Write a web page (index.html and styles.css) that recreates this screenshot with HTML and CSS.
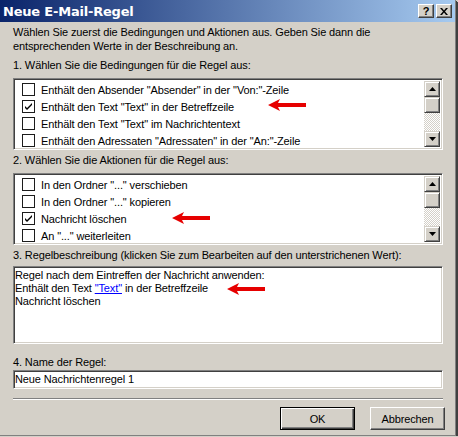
FILE: index.html
```html
<!DOCTYPE html>
<html>
<head>
<meta charset="utf-8">
<link rel="stylesheet" href="styles.css">
</head>
<body>
<div class="window">
  <div class="titlebar">
    <span class="title">Neue E-Mail-Regel</span>
    <div class="tbuttons">
      <span class="tbtn help">?</span>
      <span class="tbtn close"><svg width="8" height="7" viewBox="0 0 8 7"><path d="M0 0h2l2 2.5L6 0h2L5 3.5 8 7H6L4 4.5 2 7H0l3-3.5z" fill="#000"/></svg></span>
    </div>
  </div>
  <div class="content">
    <p class="intro">Wählen Sie zuerst die Bedingungen und Aktionen aus. Geben Sie dann die entsprechenden Werte in der Beschreibung an.</p>

    <div class="label l1">1. Wählen Sie die Bedingungen für die Regel aus:</div>
    <div class="listbox">
      <ul class="items">
        <li><span class="cb"></span>Enthält den Absender "Absender" in der "Von:"-Zeile</li>
        <li><span class="cb checked"><svg width="9" height="9" viewBox="0 0 9 9"><path d="M1 4l2 2 5-5v2L3 8 1 6z" fill="#000"/></svg></span>Enthält den Text "Text" in der Betreffzeile</li>
        <li><span class="cb"></span>Enthält den Text "Text" im Nachrichtentext</li>
        <li><span class="cb"></span>Enthält den Adressaten "Adressaten" in der "An:"-Zeile</li>
      </ul>
      <div class="scrollbar">
        <span class="sbtn"><svg width="7" height="4" viewBox="0 0 7 4"><path d="M3.5 0L7 4H0z" fill="#000"/></svg></span>
        <span class="thumb"></span>
        <span class="track"></span>
        <span class="sbtn"><svg width="7" height="4" viewBox="0 0 7 4"><path d="M0 0h7L3.5 4z" fill="#000"/></svg></span>
      </div>
    </div>

    <div class="label l2">2. Wählen Sie die Aktionen für die Regel aus:</div>
    <div class="listbox">
      <ul class="items">
        <li><span class="cb"></span>In den Ordner "..." verschieben</li>
        <li><span class="cb"></span>In den Ordner "..." kopieren</li>
        <li><span class="cb checked"><svg width="9" height="9" viewBox="0 0 9 9"><path d="M1 4l2 2 5-5v2L3 8 1 6z" fill="#000"/></svg></span>Nachricht löschen</li>
        <li><span class="cb"></span>An "..." weiterleiten</li>
      </ul>
      <div class="scrollbar">
        <span class="sbtn"><svg width="7" height="4" viewBox="0 0 7 4"><path d="M3.5 0L7 4H0z" fill="#000"/></svg></span>
        <span class="thumb"></span>
        <span class="track"></span>
        <span class="sbtn"><svg width="7" height="4" viewBox="0 0 7 4"><path d="M0 0h7L3.5 4z" fill="#000"/></svg></span>
      </div>
    </div>

    <div class="label l3">3. Regelbeschreibung (klicken Sie zum Bearbeiten auf den unterstrichenen Wert):</div>
    <div class="descbox">
      <div>Regel nach dem Eintreffen der Nachricht anwenden:</div>
      <div>Enthält den Text <a class="link">"Text"</a> in der Betreffzeile</div>
      <div>Nachricht löschen</div>
    </div>

    <div class="label l4">4. Name der Regel:</div>
    <div class="inputbox">Neue Nachrichtenregel 1</div>

    <div class="separator"></div>

    <div class="buttons">
      <span class="btn default">OK</span>
      <span class="btn">Abbrechen</span>
    </div>
  </div>

  <svg class="arrow a1" width="38" height="12" viewBox="0 0 38 12"><path d="M0 6 L12 0 L10 4 L38 4 L38 8 L10 8 L12 12 Z" fill="#e60000"/></svg>
  <svg class="arrow a2" width="38" height="12" viewBox="0 0 38 12"><path d="M0 6 L12 0 L10 4 L38 4 L38 8 L10 8 L12 12 Z" fill="#e60000"/></svg>
  <svg class="arrow a3" width="38" height="12" viewBox="0 0 38 12"><path d="M0 6 L12 0 L10 4 L38 4 L38 8 L10 8 L12 12 Z" fill="#e60000"/></svg>
</div>
</body>
</html>
```

FILE: styles.css
```css
html, body {
  margin: 0;
  padding: 0;
  background: #d4d0c8;
}
body {
  font-family: "Liberation Sans", Arial, sans-serif;
  font-size: 11px;
  color: #000;
}
.window {
  position: relative;
  width: 455px;
  height: 435px;
  background: #d4d0c8;
  border-right: 1px solid #808080;
  border-bottom: 1px solid #808080;
  box-shadow: 1px 1px 0 #404040, 2px 2px 0 #404040;
  display: flex;
  flex-direction: column;
  overflow: visible;
}
.titlebar {
  height: 22px;
  background: linear-gradient(to right, #0a246a, #a6caf0);
  display: flex;
  align-items: center;
  justify-content: space-between;
  padding: 0 3px 0 3px;
  flex-shrink: 0;
}
.title {
  color: #fff;
  font-weight: bold;
  font-size: 13px;
  font-family: "DejaVu Sans", "Liberation Sans", sans-serif;
  letter-spacing: -0.2px;
}
.tbuttons {
  display: flex;
  gap: 2px;
}
.tbtn {
  width: 16px;
  height: 14px;
  box-sizing: border-box;
  background: #d4d0c8;
  border-top: 1px solid #fff;
  border-left: 1px solid #fff;
  border-right: 1px solid #404040;
  border-bottom: 1px solid #404040;
  box-shadow: inset -1px -1px 0 #808080;
  display: flex;
  align-items: center;
  justify-content: center;
  font-weight: bold;
  font-size: 11px;
  line-height: 12px;
}
.content {
  padding: 3px 12px 0 13px;
  display: flex;
  flex-direction: column;
  letter-spacing: -0.12px;
}
.intro {
  margin: 0;
  line-height: 14px;
  width: 380px;
}
.label {
  line-height: 13px;
  height: 13px;
  white-space: nowrap;
}
.l1 { margin-top: 6px; margin-bottom: 6px; }
.l2 { margin-top: 4px; margin-bottom: 6px; }
.l3 { margin-top: 4px; margin-bottom: 4px; }
.l4 { margin-top: 12px; margin-bottom: 1px; }
.listbox {
  height: 72px;
  flex-shrink: 0;
  box-sizing: border-box;
  background: #fff;
  border-top: 1px solid #808080;
  border-left: 1px solid #808080;
  border-right: 1px solid #fff;
  border-bottom: 1px solid #fff;
  box-shadow: inset 1px 1px 0 #404040, inset -1px -1px 0 #d4d0c8;
  display: flex;
  padding: 2px;
}
.items {
  list-style: none;
  margin: 0;
  padding: 0 0 0 6px;
  flex: 1;
}
.items li {
  height: 17px;
  display: flex;
  align-items: center;
  white-space: nowrap;
}
.cb {
  width: 13px;
  height: 13px;
  box-sizing: border-box;
  border: 1px solid #1c1c1c;
  background: #fff;
  margin-right: 6px;
  display: flex;
  align-items: center;
  justify-content: center;
  flex-shrink: 0;
}
.scrollbar {
  width: 16px;
  display: flex;
  flex-direction: column;
}
.sbtn, .thumb {
  width: 16px;
  height: 16px;
  box-sizing: border-box;
  background: #d4d0c8;
  border-top: 1px solid #d4d0c8;
  border-left: 1px solid #d4d0c8;
  border-right: 1px solid #404040;
  border-bottom: 1px solid #404040;
  box-shadow: inset 1px 1px 0 #fff, inset -1px -1px 0 #808080;
  display: flex;
  align-items: center;
  justify-content: center;
  flex-shrink: 0;
}
.track {
  flex: 1;
  background-color: #fff;
  background-image: repeating-conic-gradient(#d4d0c8 0 25%, #fff 0 50%);
  background-size: 2px 2px;
}
.descbox {
  height: 78px;
  flex-shrink: 0;
  box-sizing: border-box;
  background: #fff;
  border-top: 1px solid #808080;
  border-left: 1px solid #808080;
  border-right: 1px solid #fff;
  border-bottom: 1px solid #fff;
  box-shadow: inset 1px 1px 0 #404040, inset -1px -1px 0 #d4d0c8;
  padding: 2px 1px;
  line-height: 13px;
}
.link {
  color: #0000ff;
  text-decoration: underline;
}
.inputbox {
  height: 19px;
  flex-shrink: 0;
  box-sizing: border-box;
  background: #fff;
  border-top: 1px solid #808080;
  border-left: 1px solid #808080;
  border-right: 1px solid #fff;
  border-bottom: 1px solid #fff;
  box-shadow: inset 1px 1px 0 #404040, inset -1px -1px 0 #d4d0c8;
  padding: 2px 1px;
  line-height: 13px;
}
.separator {
  margin-top: 9px;
  height: 0;
  border-top: 1px solid #808080;
  border-bottom: 1px solid #fff;
}
.buttons {
  margin-top: 7px;
  margin-right: -2px;
  display: flex;
  justify-content: flex-end;
  gap: 15px;
}
.btn {
  width: 75px;
  height: 23px;
  box-sizing: border-box;
  background: #d4d0c8;
  border-top: 1px solid #fff;
  border-left: 1px solid #fff;
  border-right: 1px solid #404040;
  border-bottom: 1px solid #404040;
  box-shadow: inset -1px -1px 0 #808080;
  display: flex;
  align-items: center;
  justify-content: center;
}
.btn.default {
  border: 1px solid #000;
  box-shadow: inset 1px 1px 0 #fff, inset -1px -1px 0 #404040, inset -2px -2px 0 #808080;
}
.arrow {
  position: absolute;
}
.a1 { left: 268px; top: 99px; }
.a2 { left: 172px; top: 212px; }
.a3 { left: 227px; top: 283px; }
```
